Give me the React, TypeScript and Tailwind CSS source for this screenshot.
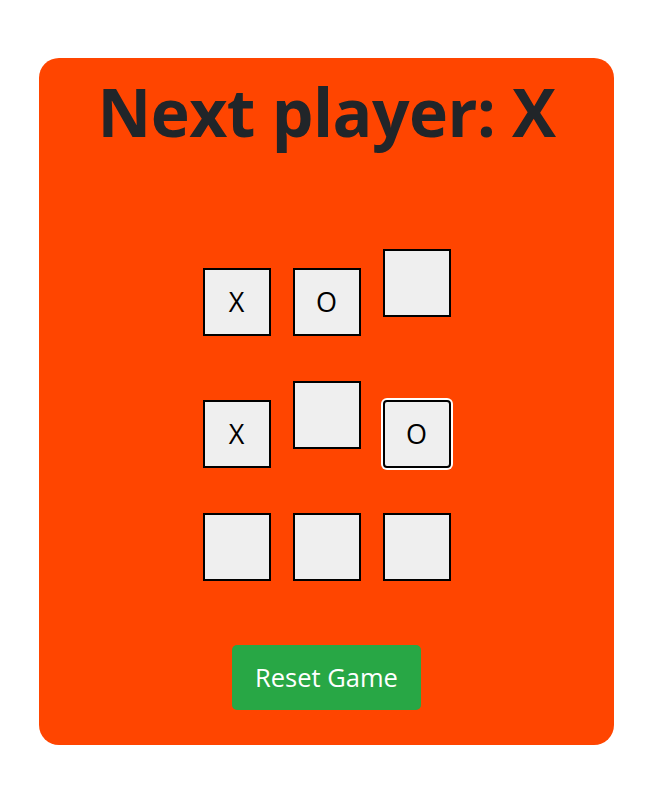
import React, { useState } from "react";

type Cell = "X" | "O" | null;

const initial: Cell[] = ["X", "O", null, "X", null, "O", null, null, null];

const App: React.FC = () => {
  const [board, setBoard] = useState<Cell[]>(initial);
  const focused = 5;

  const xCount = board.filter(c => c === "X").length;
  const oCount = board.filter(c => c === "O").length;
  const next = xCount > oCount ? "O" : "X";

  const play = (i: number) => {
    if (board[i]) return;
    setBoard(b => b.map((c, j) => (j === i ? next : c)));
  };

  const rows = [0, 1, 2].map(r => board.slice(r * 3, r * 3 + 3));

  return (
    <div className="min-h-[785px] bg-white pt-[58px] font-['Open_Sans',sans-serif]">
      <div className="ml-[39px] w-[575px] h-[687px] rounded-[20px] bg-[#ff4500] flex flex-col items-center">
        {/* Heading */}
        <h1 className="mt-[8px] text-[66px] leading-[90px] font-bold text-[#212529] tracking-[-0.5px]">
          Next player: {next}
        </h1>

        {/* Board */}
        <div className="mt-[93px] flex flex-col gap-[45px]">
          {rows.map((row, r) => (
            <div key={r} className="flex items-end gap-[22px] h-[87px]">
              {row.map((cell, c) => {
                const i = r * 3 + c;
                const isFocus = i === focused;
                return (
                  <button
                    key={i}
                    type="button"
                    onClick={() => play(i)}
                    className={`w-[68px] h-[68px] bg-[#efefef] border-2 border-black flex items-center justify-center text-[27px] text-black ${
                      cell ? "" : "mb-[19px]"
                    } ${isFocus ? "rounded-[4px] ring-2 ring-white" : ""}`}
                  >
                    {cell}
                  </button>
                );
              })}
            </div>
          ))}
        </div>

        {/* Reset */}
        <button
          type="button"
          onClick={() => setBoard(Array(9).fill(null))}
          className="mt-[45px] w-[189px] h-[65px] rounded-[5px] bg-[#28a745] text-white text-[25.5px]"
        >
          Reset Game
        </button>
      </div>
    </div>
  );
};

export default App;
